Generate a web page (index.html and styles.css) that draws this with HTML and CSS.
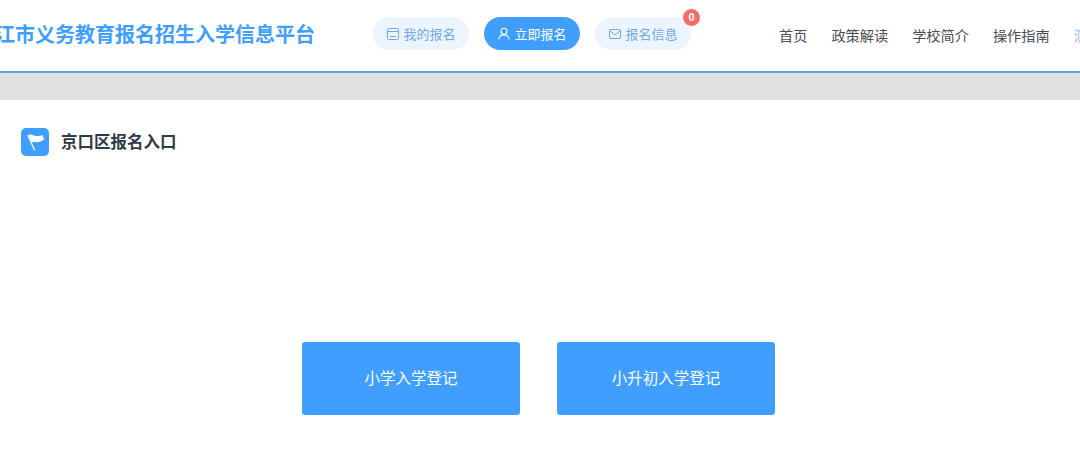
FILE: index.html
```html
<!DOCTYPE html>
<html lang="zh-CN">
<head>
<meta charset="utf-8">
<title>报名入口</title>
<link rel="stylesheet" href="styles.css">
</head>
<body>
<header class="header">
  <h1 class="title">镇江市义务教育报名招生入学信息平台</h1>
  <div class="pills">
    <a class="pill">
      <svg class="pill-icon" viewBox="0 0 13 13" fill="none" stroke="currentColor" stroke-width="1"><rect x="1.500" y="1.500" width="11" height="11" rx="1.200"/><path d="M1.500 4.500h11M4 9.500h6"/></svg>
      我的报名
    </a>
    <a class="pill pill-active">
      <svg class="pill-icon" viewBox="0 0 13 13" fill="none" stroke="currentColor" stroke-width="1.100"><circle cx="7" cy="4.300" r="3"/><path d="M2 12.500c0-3 2.200-4.600 5-4.600s5 1.600 5 4.600"/></svg>
      立即报名
    </a>
    <a class="pill pill-badged">
      <svg class="pill-icon" viewBox="0 0 13 13" fill="none" stroke="currentColor" stroke-width="1"><rect x="1.500" y="2.500" width="11" height="9" rx="1.500"/><path d="M2 4l5 3.800L12 4"/></svg>
      报名信息
      <span class="badge">0</span>
    </a>
  </div>
  <nav class="nav">
    <a>首页</a>
    <a>政策解读</a>
    <a>学校简介</a>
    <a>操作指南</a>
    <a class="nav-login">测试账号</a>
  </nav>
</header>
<div class="band"></div>
<main class="main">
  <div class="section-head">
    <span class="flag">
      <svg viewBox="0 0 28 28" width="28" height="28"><path d="M7 7.500l6.500 14.500" stroke="#fff" stroke-width="1.300" stroke-linecap="round" fill="none"/><path d="M7.500 7C10 5.500 12.500 7.500 15 8c2.500.4 5-.3 7-1-.3 1.500.2 3 1.500 4-2.500 2-5 3.500-8 3.300-1.600-.1-3-.6-4.500.2z" fill="#fff"/></svg>
    </span>
    <h2 class="section-title">京口区报名入口</h2>
  </div>
  <div class="entries">
    <a class="entry">小学入学登记</a>
    <a class="entry">小升初入学登记</a>
  </div>
</main>
</body>
</html>
```
FILE: styles.css
```css
* { box-sizing: border-box; }
html, body { margin: 0; height: 100%; overflow: hidden; background: #fff; }
body { font-family: "Noto Sans CJK SC", "Liberation Sans", sans-serif; }
.header {
  display: flex;
  align-items: center;
  height: 73px;
  padding-bottom: 4px;
  border-bottom: 2px solid #58a4ea;
  background: #fff;
  white-space: nowrap;
  overflow: hidden;
}
.title {
  margin: 0 0 0 -25px;
  width: 398px;
  flex: none;
  font-size: 20px;
  font-weight: 700;
  color: #409eff;
}
.pills { display: flex; gap: 15px; flex: none; }
.pill {
  position: relative;
  display: flex;
  align-items: center;
  justify-content: center;
  gap: 4px;
  width: 96px;
  height: 33px;
  border-radius: 17px;
  background: #ecf5ff;
  color: #6fa9ec;
  font-size: 13px;
}
.pill-active { background: #409eff; color: #fff; }
.pill-icon { width: 13px; height: 13px; flex: none; }
.badge {
  position: absolute;
  top: -9px;
  right: -10px;
  width: 19px;
  height: 19px;
  border-radius: 50%;
  background: #f56c6c;
  border: 1px solid #fff;
  color: #fff;
  font: 700 11px/17px "Liberation Sans", sans-serif;
  text-align: center;
}
.nav {
  display: flex;
  gap: 24px;
  margin-left: 88px;
  padding-top: 2px;
  font-size: 14.200px;
  color: #4a4f57;
  flex: none;
}
.nav-login { color: #8fb8ee; }
.band { height: 27px; background: #e0e0e0; }
.main { padding: 28px 21px 0; }
.section-head { display: flex; align-items: center; gap: 12px; height: 28px; }
.flag {
  display: block;
  width: 28px;
  height: 28px;
  border-radius: 5px;
  background: #409eff;
  flex: none;
}
.flag svg { display: block; }
.section-title { margin: 0 0 2px; font-size: 16.500px; font-weight: 700; color: #303a45; }
.entries { display: flex; justify-content: center; gap: 37px; margin-top: 186px; padding-right: 4px; }
.entry {
  display: flex;
  align-items: center;
  justify-content: center;
  width: 218px;
  height: 73px;
  padding: 0 0 4px 1px;
  border-radius: 3px;
  background: #409eff;
  color: #fff;
  font-size: 15.500px;
}
```
